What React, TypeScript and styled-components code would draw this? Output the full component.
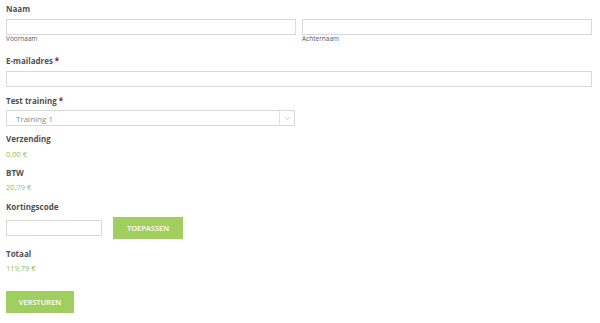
import React from "react";
import styled, { createGlobalStyle } from "styled-components";

const GlobalStyle = createGlobalStyle`
  body {
    margin: 0;
    background: #ffffff;
    font-family: "Open Sans", "Liberation Sans", sans-serif;
  }
`;

const Form = styled.form`
  width: 586px;
  padding: 3px 0 0 6px;
`;

const Section = styled.div<{ $mt?: number }>`
  margin-top: ${(p) => p.$mt ?? 0}px;
`;

const Label = styled.div<{ $mb?: number }>`
  font-size: 8px;
  font-weight: 700;
  line-height: 12px;
  color: #505050;
  margin-bottom: ${(p) => p.$mb ?? 4}px;
`;

const Required = styled.span`
  color: #8a1c2b;
  margin-left: 2px;
`;

const Row = styled.div`
  display: grid;
  grid-template-columns: 1fr 1fr;
  column-gap: 6px;
`;

const TextInput = styled.input<{ $w?: number }>`
  display: block;
  box-sizing: border-box;
  width: ${(p) => (p.$w ? `${p.$w}px` : "100%")};
  height: 16px;
  border: 1px solid #d9d9d9;
  background: #fff;
  margin: 0;
  padding: 0 4px;
  outline: none;
`;

const SubLabel = styled.div`
  font-size: 6.5px;
  line-height: 8px;
  color: #5a5a5a;
`;

const Select = styled.div`
  box-sizing: border-box;
  width: 289px;
  height: 16px;
  border: 1px solid #d9d9d9;
  display: flex;
  align-items: center;
`;

const SelectText = styled.span`
  flex: 1;
  padding-left: 9px;
  font-size: 8px;
  color: #8a8a8a;
`;

const SelectArrow = styled.span`
  width: 14px;
  height: 100%;
  border-left: 1px solid #e2e2e2;
  display: flex;
  align-items: center;
  justify-content: center;
`;

const Value = styled.div`
  font-size: 7.5px;
  line-height: 12px;
  color: #8cc152;
`;

const CouponRow = styled.div`
  display: flex;
  align-items: center;
  gap: 11px;
`;

const Button = styled.button<{ $w: number }>`
  width: ${(p) => p.$w}px;
  height: 22px;
  border: none;
  margin: 0;
  padding: 0;
  background: #a0cf5f;
  color: #fff;
  font-family: "Open Sans", "Liberation Sans", sans-serif;
  font-size: 7.5px;
  font-weight: 600;
  text-transform: uppercase;
  cursor: pointer;
`;

export default function App() {
  return (
    <>
      <GlobalStyle />
      <Form onSubmit={(e) => e.preventDefault()}>
        <Section>
          <Label>Naam</Label>
          <Row>
            <div>
              <TextInput />
              <SubLabel>Voornaam</SubLabel>
            </div>
            <div>
              <TextInput />
              <SubLabel>Achternaam</SubLabel>
            </div>
          </Row>
        </Section>

        <Section $mt={12}>
          <Label>
            E-mailadres<Required>*</Required>
          </Label>
          <TextInput />
        </Section>

        <Section $mt={8}>
          <Label $mb={3}>
            Test training<Required>*</Required>
          </Label>
          <Select>
            <SelectText>Training 1</SelectText>
            <SelectArrow>
              <svg width="5" height="3" viewBox="0 0 5 3">
                <path d="M0.5 0.5 L2.5 2.5 L4.5 0.5" fill="none" stroke="#b5b5b5" strokeWidth="0.8" />
              </svg>
            </SelectArrow>
          </Select>
        </Section>

        <Section $mt={7}>
          <Label $mb={3}>Verzending</Label>
          <Value>0,00 €</Value>
        </Section>

        <Section $mt={7}>
          <Label $mb={2}>BTW</Label>
          <Value>20,79 €</Value>
        </Section>

        <Section $mt={8}>
          <Label>Kortingscode</Label>
          <CouponRow>
            <TextInput $w={96} />
            <Button type="button" $w={70}>Toepassen</Button>
          </CouponRow>
        </Section>

        <Section $mt={9}>
          <Label $mb={2}>Totaal</Label>
          <Value>119,79 €</Value>
        </Section>

        <Section $mt={14}>
          <Button type="submit" $w={68}>Versturen</Button>
        </Section>
      </Form>
    </>
  );
}
